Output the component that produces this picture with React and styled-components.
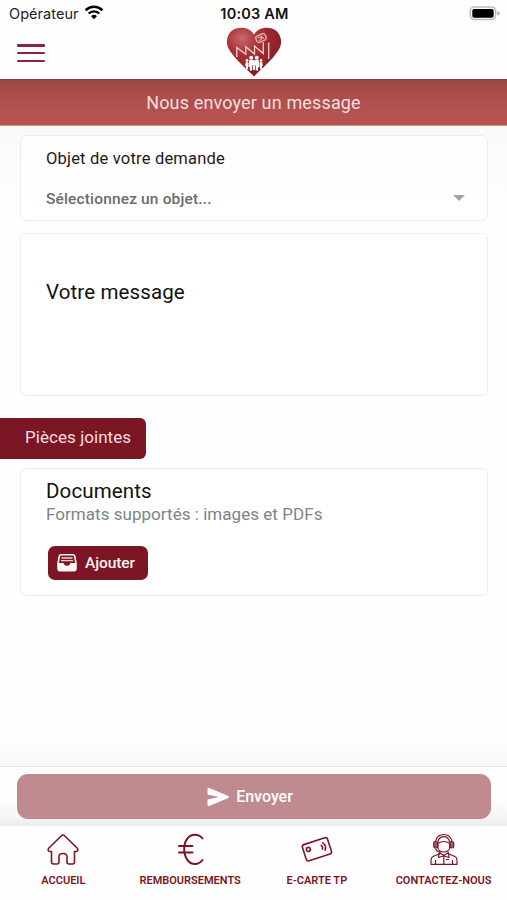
import styled, { createGlobalStyle } from 'styled-components';

const GlobalStyle = createGlobalStyle`
    * {
        box-sizing: border-box;
    }

    body {
        margin: 0;
        background: #fefefe;
        font-family: Roboto, 'Liberation Sans', sans-serif;
    }

    button {
        font-family: inherit;
        border: none;
        cursor: pointer;
    }
`;

const Screen = styled.div`
    width: 507px;
    height: 900px;
    display: flex;
    flex-direction: column;
    overflow: hidden;
`;

// --- Barre de statut et en-tête ---

const StatusBar = styled.div`
    height: 27px;
    flex-shrink: 0;
    display: grid;
    grid-template-columns: 1fr auto 1fr;
    align-items: center;
    padding: 0 7px 1px 9px;
    font-family: Inter, sans-serif;
    font-size: 14px;
    color: #222;
`;

const Carrier = styled.div`
    display: flex;
    align-items: center;
    gap: 5px;
    font-size: 14.5px;
    letter-spacing: 0.05px;

    svg {
        margin-bottom: 2px;
    }
`;

const Clock = styled.div`
    font-weight: 600;
    font-size: 14.5px;
    letter-spacing: 0.2px;
    color: #111;
`;

const Battery = styled.svg`
    justify-self: end;
    display: block;
`;

const Header = styled.header`
    height: 52px;
    flex-shrink: 0;
    display: grid;
    grid-template-columns: 1fr 56px 1fr;
    padding: 0 16px;
`;

const MenuButton = styled.button`
    width: 30px;
    height: 20px;
    margin-top: 16px;
    padding: 1px;
    background: none;
    display: flex;
    flex-direction: column;
    justify-content: space-between;

    span {
        height: 2.5px;
        border-radius: 1px;
        background: #8b2640;
    }
`;

const TitleBand = styled.div`
    height: 47px;
    flex-shrink: 0;
    display: flex;
    align-items: center;
    justify-content: center;
    background: linear-gradient(#994746, #ac4f4d 40%, #b55350 80%);
    border-top: 1px solid #86413f;
    border-bottom: 1px solid #cf9391;
    color: #f5dedd;
    font-size: 18px;
    letter-spacing: 0.15px;
`;

// --- Formulaire ---

const Content = styled.main`
    flex: 1;
    display: flex;
    flex-direction: column;
    align-items: flex-start;
    padding: 9px 19px 0 20px;
    background: linear-gradient(#f9f9f9, #fefefe 80px, #fefefe 610px, #f7f7f7);
`;

const Card = styled.section`
    width: 100%;
    height: ${props => props.$height}px;
    flex-shrink: 0;
    margin-top: ${props => props.$gap || 0}px;
    padding: ${props => props.$top}px 22px 0 25px;
    border: 1.5px solid #ededed;
    border-radius: 6px;
    background: rgba(255, 255, 255, 0.5);
`;

const FieldLabel = styled.div`
    font-size: 16.5px;
    line-height: 20px;
    letter-spacing: 0.2px;
    color: #1b1b1b;
`;

const Select = styled.div`
    display: flex;
    justify-content: space-between;
    align-items: center;
    margin-top: 20px;
    line-height: 20px;
    font-size: 15.5px;
    font-weight: 500;
    letter-spacing: 0.15px;
    color: #6b6b6b;
`;

const Caret = styled.span`
    border: 6px solid transparent;
    border-top-color: #a5a5a5;
    border-bottom: none;
    margin-bottom: 3px;
`;

const BigText = styled.div`
    font-size: 20.5px;
    line-height: 24px;
    letter-spacing: 0.12px;
    color: #111;
`;

const Hint = styled.div`
    font-size: 17px;
    line-height: 22px;
    letter-spacing: 0.04px;
    color: #7d8489;
`;

const SectionTag = styled.h2`
    height: 41px;
    margin: 22px 0 9px -20px;
    padding: 0 15px 3px 25px;
    display: flex;
    align-items: center;
    border-radius: 0 6px 6px 0;
    background: #7c1524;
    color: #f7dfe0;
    font-size: 17px;
    font-weight: 400;
    letter-spacing: 0.05px;
`;

const AddButton = styled.button`
    width: 100px;
    height: 34px;
    margin: 21px 0 0 2px;
    padding: 0 0 0 9px;
    display: flex;
    align-items: center;
    gap: 8px;
    border-radius: 7px;
    background: #7c1524;
    color: #fff3f3;
    font-size: 15.5px;
    font-weight: 500;
    letter-spacing: -0.1px;
`;

// --- Bas de page ---

const SendBar = styled.div`
    height: 60px;
    flex-shrink: 0;
    padding: 7px 16px 0 17px;
    border-top: 1px solid #e5e5e5;
    background: linear-gradient(#fefefe 50%, #f5f5f5 88%, #ebebeb);
`;

const SendButton = styled.button`
    width: 100%;
    height: 45px;
    padding: 0 8px 0 0;
    display: flex;
    align-items: center;
    justify-content: center;
    gap: 6px;
    border-radius: 11px;
    background: #bf8a90;
    color: #fff;
    font-size: 16px;
    font-weight: 500;
`;

const TabBar = styled.nav`
    height: 74px;
    flex-shrink: 0;
    display: grid;
    grid-template-columns: repeat(4, 1fr);
    background: #fefefe;
`;

const Tab = styled.a`
    display: flex;
    flex-direction: column;
    align-items: center;
    padding-top: 7px;
    color: #7c1524;
    font-size: 11px;
    line-height: 14px;
    font-weight: 600;
    white-space: nowrap;

    svg {
        margin-bottom: 8px;
    }
`;

const Wifi = () => (
    <svg width="20" height="15" viewBox="0 0 20 15" fill="none" stroke="#000">
        <path d="M1.6 5.2a12 12 0 0 1 16.8 0" strokeWidth="2.6" />
        <path d="M4.6 8.5a7.8 7.8 0 0 1 10.8 0" strokeWidth="2.4" />
        <path d="M10 14.3 7.1 11.3a4.1 4.1 0 0 1 5.8 0z" fill="#000" stroke="none" />
    </svg>
);

const HeartLogo = () => (
    <svg width="56" height="52" viewBox="0 0 56 52" fill="none">
        <defs>
            <radialGradient id="heart" cx="0.28" cy="0.22" r="0.8">
                <stop offset="0" stopColor="#c56a6c" />
                <stop offset="0.35" stopColor="#ad343c" />
                <stop offset="1" stopColor="#861923" />
            </radialGradient>
        </defs>
        <path d="M28 49.5C22 43 14 37 7 28 2 22 .5 18 1 13 2 5 8 .8 15 .8c6 0 10.500 2.500 13 6.700C30.500 3.300 35 .8 41 .8c7 0 13 4.200 14 12.200.5 5-1 9-6 15-7 9-15 15-21 21.500z" fill="url(#heart)" />
        <path d="M10.800 30V20.500l9 6.700V19.700l8.700 7.300V19l8.800 7.500V15.300M42.700 15.500V32" stroke="#f3d3cf" strokeWidth="1.300" />
        <g stroke="#e3b0ac" strokeWidth="1.300" transform="rotate(-24 35 11)">
            <rect x="30" y="7.500" width="10" height="7" rx="2.500" />
            <path d="M32 10c2-2 3 2 5-1M32 12.500h2l2-1.500 2 1.500" />
        </g>
        <g fill="#fff">
            <circle cx="25.200" cy="30.700" r="2" />
            <circle cx="30.800" cy="30.700" r="2" />
            <circle cx="21" cy="33.500" r="1.400" />
            <circle cx="35" cy="33.500" r="1.400" />
            <path d="M23.300 33h4.200l.5 1 .5-1h4.200l.8 7h-1.300v3.500h-2.400V38.500h-3.600v5h-2.400V40h-1.300zM19.700 35.300h2.800l-.6 7h-1.900v-3l-.8-.5zM33.500 35.300h2.800l.5 3.500-.8.500v3h-1.900z" />
            <circle cx="28" cy="37.200" r="1.200" />
            <path d="M27 38.700h2v4.300h-2z" />
        </g>
    </svg>
);

const InboxIcon = () => (
    <svg width="20" height="18" viewBox="0 0 20 18" fill="none">
        <path d="M1 10 2.200 2.500Q2.500.8 4.300.8H15.700Q17.500.8 17.800 2.500L19 10" stroke="#fff3f3" strokeWidth="1.600" />
        <path d="M4.500 4h11M4 6.600h12" stroke="#f3d5d7" strokeWidth="1.400" />
        <path d="M.2 9h6.100c.6 0 .7 2.800 3.700 2.800S13.100 9 13.700 9h6.100v6q0 2.400-2.300 2.400h-15Q.2 17.400.2 15z" fill="#fff3f3" />
    </svg>
);

const SendIcon = () => (
    <svg width="23" height="20" viewBox="0 0 23 20" fill="#fff">
        <path d="M.5 2.200Q.5.400 2.300 1l19 8q1.600 1 0 2L2.300 19Q.5 19.600.5 17.800v-5.300L12 10 .5 7.500z" />
    </svg>
);

const HomeIcon = () => (
    <svg width="32" height="33" viewBox="0 0 32 33" fill="none" stroke="currentColor" strokeWidth="1.600" strokeLinejoin="round">
        <path d="M14.700 2.500Q16 1.500 17.300 2.500L30.300 15.200Q31 16 30.800 17.300q-.3 1.200-1.500 1.200H27.500V29q0 2-2 2H22q-2 0-2-2v-5.500q0-3-4-3t-4 3V29q0 2-2 2H6.500q-2 0-2-2V18.500H2.700q-1.200 0-1.500-1.200Q1 16 1.700 15.200z" />
    </svg>
);

const EuroIcon = () => (
    <svg width="32" height="33" viewBox="0 0 32 33" fill="none" stroke="currentColor" strokeWidth="2" strokeLinecap="round">
        <path d="M28.500 5.500C26.500 3 24 1.800 21 1.800c-6.500 0-10.800 6-10.800 14.200S14.500 31 21 31c3 0 5.500-1.300 7.500-4M5 13h13.500M5 19.500h13.500" />
    </svg>
);

const CardIcon = () => (
    <svg width="32" height="33" viewBox="0 0 32 33" fill="none" stroke="currentColor" strokeWidth="1.600" strokeLinecap="round">
        <g transform="rotate(-18 16 16.500)">
            <rect x="2.800" y="7.800" width="26.400" height="17" rx="2.200" />
            <circle cx="7.800" cy="13.800" r="2" />
            <path d="M21.300 13.800q1.500 2 0 4M23.500 12q3.200 3.800 0 7.600" />
        </g>
    </svg>
);

const SupportIcon = () => (
    <svg width="32" height="33" viewBox="0 0 32 33" fill="none" stroke="currentColor" strokeWidth="1.200" strokeLinejoin="round">
        <path d="M7.500 8.500C8.500 4 11.500 1.500 15.700 1.500S23 4 24 8.500M9.800 9c.8-3.600 3-5.300 5.900-5.300S20.800 5.400 21.600 9" />
        <rect x="5.700" y="8.500" width="4" height="6.500" rx="1.800" fill="#a75b69" />
        <rect x="21.800" y="8.500" width="4" height="6.500" rx="1.800" fill="#a75b69" />
        <path d="M9.800 10.500q5.900-4 12 0v3c0 3.500-2.700 5.500-6 5.500s-6-2-6-5.500zM7.700 15.500q0 3 4 3" />
        <path d="M12 18.500v2.200l-6.500 2.600Q3 24.500 3 27v4.300h26V27q0-2.500-2.500-3.700L20 20.700v-2.200" />
        <path d="M11 19.800l4.800 2.400 4.800-2.400.4 4.700-5.200-1.800-5.200 1.800zM7.500 27v4M24.500 27v4M15.800 23.500v7.500M18 26.500h3" />
    </svg>
);

const tabs = [
    { label: 'ACCUEIL', Icon: HomeIcon },
    { label: 'REMBOURSEMENTS', Icon: EuroIcon },
    { label: 'E-CARTE TP', Icon: CardIcon },
    { label: 'CONTACTEZ-NOUS', Icon: SupportIcon },
];

export default function App() {
    return (
        <Screen>
            <GlobalStyle />
            <StatusBar>
                <Carrier>
                    Opérateur
                    <Wifi />
                </Carrier>
                <Clock>10:03 AM</Clock>
                <Battery width="31" height="15" viewBox="0 0 31 15">
                    <rect x="1.300" y="1" width="25.400" height="12.600" rx="4" fill="#fff" stroke="#bdbdbd" strokeWidth="1.500" />
                    <rect x="3.300" y="3" width="21.400" height="8.800" rx="1.800" />
                    <path d="M28.500 5.300q2.200.6 2.200 2t-2.200 2z" fill="#aaa" />
                </Battery>
            </StatusBar>
            <Header>
                <MenuButton aria-label="Menu">
                    <span />
                    <span />
                    <span />
                </MenuButton>
                <HeartLogo />
            </Header>
            <TitleBand>Nous envoyer un message</TitleBand>

            <Content>
                <Card $height={86} $top={13}>
                    <FieldLabel>Objet de votre demande</FieldLabel>
                    <Select>
                        Sélectionnez un objet...
                        <Caret />
                    </Select>
                </Card>
                <Card $height={163} $top={46} $gap={12}>
                    <BigText>Votre message</BigText>
                </Card>
                <SectionTag>Pièces jointes</SectionTag>
                <Card $height={128} $top={10}>
                    <BigText>Documents</BigText>
                    <Hint>Formats supportés : images et PDFs</Hint>
                    <AddButton>
                        <InboxIcon />
                        Ajouter
                    </AddButton>
                </Card>
            </Content>

            <SendBar>
                <SendButton>
                    <SendIcon />
                    Envoyer
                </SendButton>
            </SendBar>
            <TabBar>
                {tabs.map(({ label, Icon }) => (
                    <Tab key={label}>
                        <Icon />
                        {label}
                    </Tab>
                ))}
            </TabBar>
        </Screen>
    );
}
